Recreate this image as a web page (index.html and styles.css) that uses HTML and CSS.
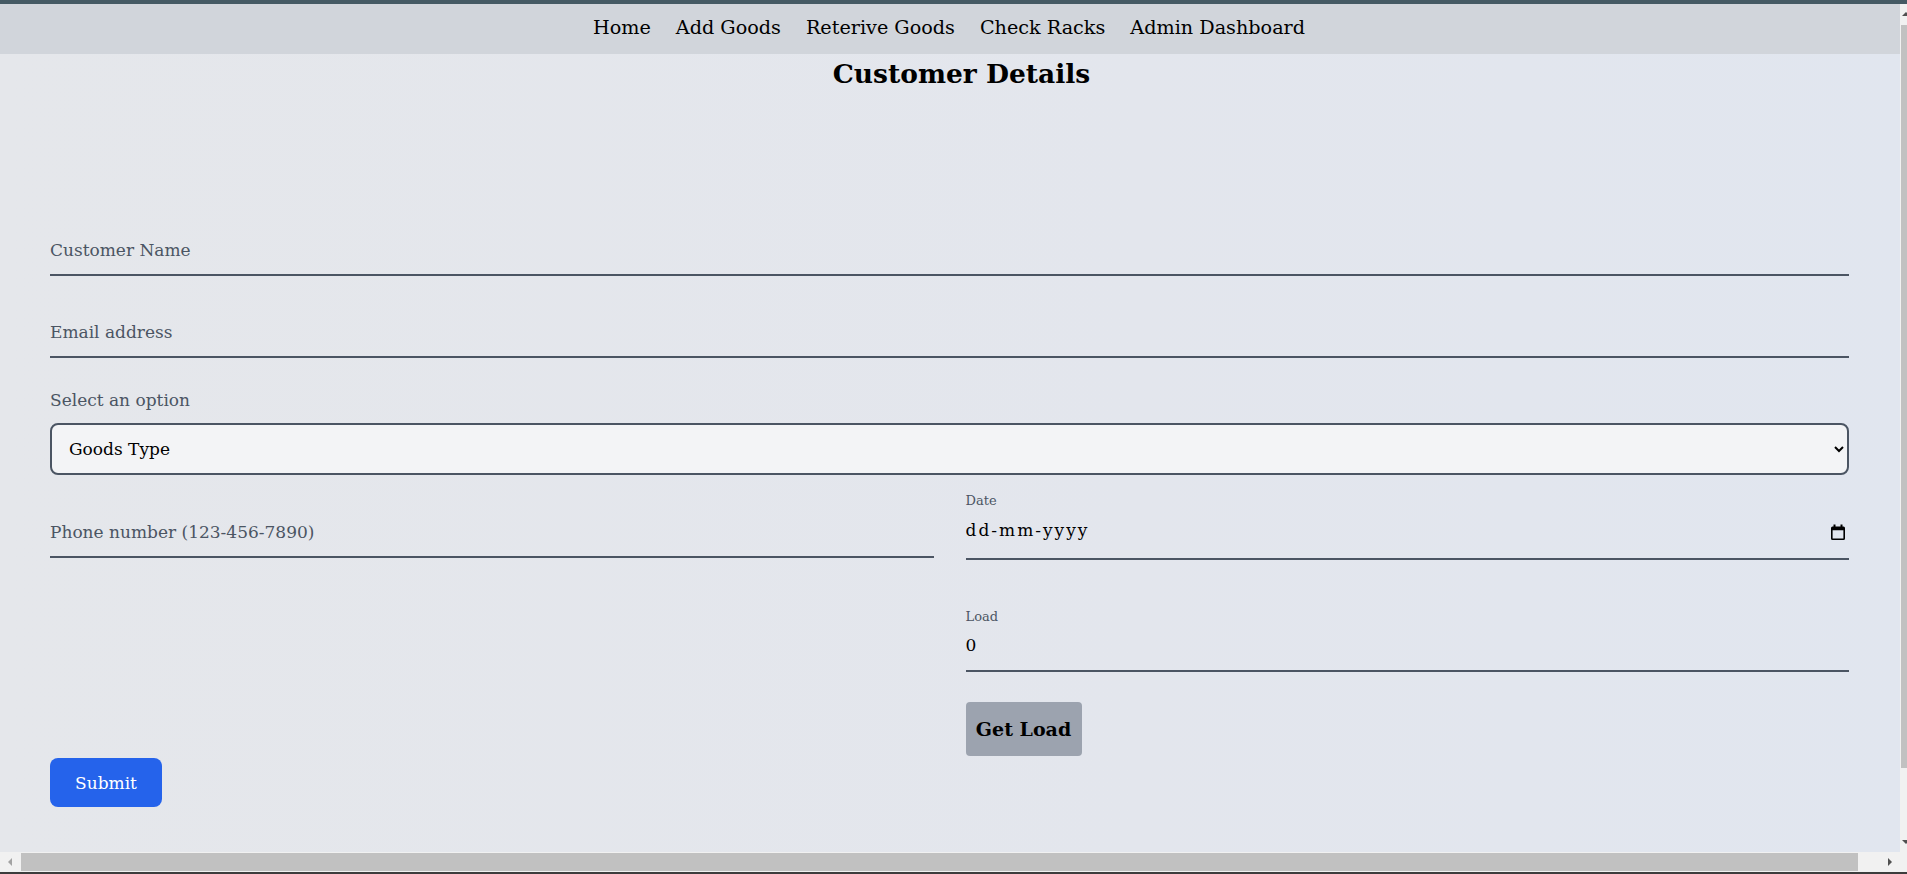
FILE: index.html
```html
<!DOCTYPE html>
<html lang="en-GB">
<head>
<meta charset="utf-8">
<title>Customer Details</title>
<link rel="stylesheet" href="styles.css">
</head>
<body>
<div class="window">
  <div class="topbar"></div>
  <div class="viewport">
    <div class="page">
      <nav class="nav">
        <a class="nav-link" href="#">Home</a>
        <a class="nav-link" href="#">Add Goods</a>
        <a class="nav-link" href="#">Reterive Goods</a>
        <a class="nav-link" href="#">Check Racks</a>
        <a class="nav-link" href="#">Admin Dashboard</a>
      </nav>
      <h1 class="title">Customer Details</h1>
      <form class="form">
        <input class="line-input" type="text" placeholder="Customer Name">
        <input class="line-input email" type="email" placeholder="Email address">
        <label class="select-label" for="goods">Select an option</label>
        <select id="goods" class="select">
          <option>Goods Type</option>
        </select>
        <div class="grid">
          <div class="col">
            <input class="line-input phone" type="tel" placeholder="Phone number (123-456-7890)">
          </div>
          <div class="col">
            <label class="small-label" for="date">Date</label>
            <div class="date-field">
              <input id="date" class="date-text" type="text" placeholder="dd-mm-yyyy">
              <svg class="cal-icon" width="14" height="16" viewBox="0 0 14 16" aria-hidden="true">
                <path fill="#000" fill-rule="evenodd" d="M2.5 0.5h2v2h5v-2h2v2h1A1.5 1.5 0 0 1 14 4v10.5A1.5 1.5 0 0 1 12.5 16h-11A1.5 1.5 0 0 1 0 14.5V4A1.5 1.5 0 0 1 1.5 2.5h1z M1.6 6.2v8.2h10.8V6.2z"/>
              </svg>
            </div>
            <label class="small-label load-label" for="load">Load</label>
            <input id="load" class="load-input" type="number" value="0">
            <button type="button" class="btn-load">Get Load</button>
          </div>
        </div>
        <button type="submit" class="btn-submit">Submit</button>
      </form>
    </div>
  </div>
  <div class="vscroll">
    <div class="vbtn"><span class="arrow-up"></span></div>
    <div class="vtrack"><div class="vthumb"></div></div>
    <div class="vbtn"><span class="arrow-down"></span></div>
  </div>
  <div class="hscroll">
    <div class="hbtn"><span class="arrow-left"></span></div>
    <div class="htrack"><div class="hthumb"></div></div>
    <div class="hbtn"><span class="arrow-right"></span></div>
  </div>
  <div class="corner"></div>
  <div class="bottombar"></div>
</div>
</body>
</html>
```

FILE: styles.css
```css
html, body {
  margin: 0;
  padding: 0;
}

body {
  font-family: "DejaVu Serif", serif;
  color: #000;
  overflow: hidden;
}

.window {
  display: grid;
  grid-template-columns: 1900px 7px;
  grid-template-rows: 4px 848px 20px 2px;
  width: 1907px;
  height: 874px;
}

.topbar {
  grid-column: 1 / -1;
  background: #455a64;
}

.bottombar {
  grid-column: 1 / -1;
  background: #3c3c3c;
}

.viewport {
  overflow: hidden;
  background: linear-gradient(90deg, #e5e7eb 0%, #e3e6ed 60%, #e1e6ef 100%);
}

.page {
  width: 1923px;
}

.nav {
  height: 50px;
  box-sizing: border-box;
  padding-top: 10px;
  background: #d1d5db;
  display: flex;
  justify-content: center;
  align-items: flex-start;
}

.nav-link {
  margin-right: 25px;
  font-size: 19.2px;
  line-height: 28px;
  color: #000;
  text-decoration: none;
}

.title {
  margin: 4px 0 0;
  text-align: center;
  font-size: 26.5px;
  line-height: 32px;
  font-weight: 700;
}

.form {
  width: 1799px;
  padding: 138px 0 119px 50px;
}

.line-input {
  display: block;
  width: 100%;
  box-sizing: border-box;
  height: 48px;
  margin: 0;
  padding: 10px 0 12px;
  border: 0;
  border-bottom: 2px solid #4b5563;
  background: transparent;
  font-family: "DejaVu Serif", serif;
  font-size: 17px;
  line-height: 24px;
  color: #111827;
  outline: none;
}

.line-input::placeholder {
  color: #4b5563;
  opacity: 1;
}

.email {
  margin-top: 34px;
}

.select-label {
  display: block;
  margin-top: 30px;
  font-size: 17px;
  line-height: 24px;
  color: #4b5563;
}

.select {
  display: block;
  width: 100%;
  box-sizing: border-box;
  height: 52px;
  margin-top: 11px;
  padding: 0 10px 0 13px;
  border: 2px solid #4b5563;
  border-radius: 8px;
  background: #f3f4f6;
  font-family: "DejaVu Serif", serif;
  font-size: 17px;
  color: #000;
}

.grid {
  display: grid;
  grid-template-columns: 1fr 1fr;
  column-gap: 32px;
  margin-top: 16px;
  align-items: start;
}

.col {
  display: flex;
  flex-direction: column;
  align-items: flex-start;
}

.phone {
  margin-top: 19px;
}

.small-label {
  display: block;
  margin-top: 2px;
  font-size: 13px;
  line-height: 16px;
  color: #4b5563;
}

.load-label {
  margin-top: 49px;
}

.date-field {
  display: flex;
  align-items: center;
  width: 100%;
  box-sizing: border-box;
  height: 50px;
  margin-top: 1px;
  padding: 8px 4px 16px 0;
  border-bottom: 2px solid #4b5563;
}

.date-text {
  flex: 1;
  min-width: 0;
  height: 24px;
  margin: 0;
  padding: 0;
  border: 0;
  background: transparent;
  font-family: "DejaVu Serif", serif;
  font-size: 17px;
  line-height: 24px;
  letter-spacing: 2px;
  color: #000;
  outline: none;
}

.date-text::placeholder {
  color: #000;
  opacity: 1;
}

.cal-icon {
  flex: none;
  margin-top: 3px;
}

.load-input {
  display: block;
  width: 100%;
  box-sizing: border-box;
  height: 47px;
  margin: 0;
  padding: 8px 0 13px;
  border: 0;
  border-bottom: 2px solid #4b5563;
  background: transparent;
  font-family: "DejaVu Serif", serif;
  font-size: 17px;
  line-height: 24px;
  color: #000;
  outline: none;
}

.btn-load {
  display: block;
  margin-top: 30px;
  width: 116px;
  height: 54px;
  padding: 0;
  border: 0;
  border-radius: 4px;
  background: #9ca3af;
  font-family: "DejaVu Serif", serif;
  font-size: 19px;
  font-weight: 700;
  color: #000;
}

.btn-submit {
  display: block;
  margin-top: 2px;
  width: 112px;
  height: 49px;
  padding: 0;
  border: 0;
  border-radius: 8px;
  background: #2563eb;
  font-family: "DejaVu Serif", serif;
  font-size: 17px;
  color: #fff;
}

/* window scrollbars */
.vscroll {
  background: #f1f1f1;
  display: flex;
  flex-direction: column;
  overflow: hidden;
}

.vbtn {
  height: 20px;
  flex: none;
  display: flex;
  align-items: center;
  justify-content: center;
}

.vtrack {
  flex: 1;
  padding-top: 1px;
}

.vthumb {
  height: 743px;
  margin-left: 1px;
  background: #c1c1c1;
}

.hscroll {
  background: #f1f1f1;
  display: flex;
}

.hbtn {
  width: 20px;
  flex: none;
  display: flex;
  align-items: center;
  justify-content: center;
}

.htrack {
  flex: 1;
  padding: 1px 0 1px 1px;
}

.hthumb {
  width: 1837px;
  height: 18px;
  background: #c1c1c1;
}

.corner {
  background: #f1f1f1;
}

.arrow-up {
  width: 0;
  height: 0;
  border-left: 4px solid transparent;
  border-right: 4px solid transparent;
  border-bottom: 4px solid #505050;
  margin-left: 4px;
}

.arrow-down {
  width: 0;
  height: 0;
  border-left: 4px solid transparent;
  border-right: 4px solid transparent;
  border-top: 4px solid #505050;
  margin-left: 4px;
}

.arrow-left {
  width: 0;
  height: 0;
  border-top: 4px solid transparent;
  border-bottom: 4px solid transparent;
  border-right: 4px solid #a3a3a3;
}

.arrow-right {
  width: 0;
  height: 0;
  border-top: 4px solid transparent;
  border-bottom: 4px solid transparent;
  border-left: 4px solid #505050;
}
```
